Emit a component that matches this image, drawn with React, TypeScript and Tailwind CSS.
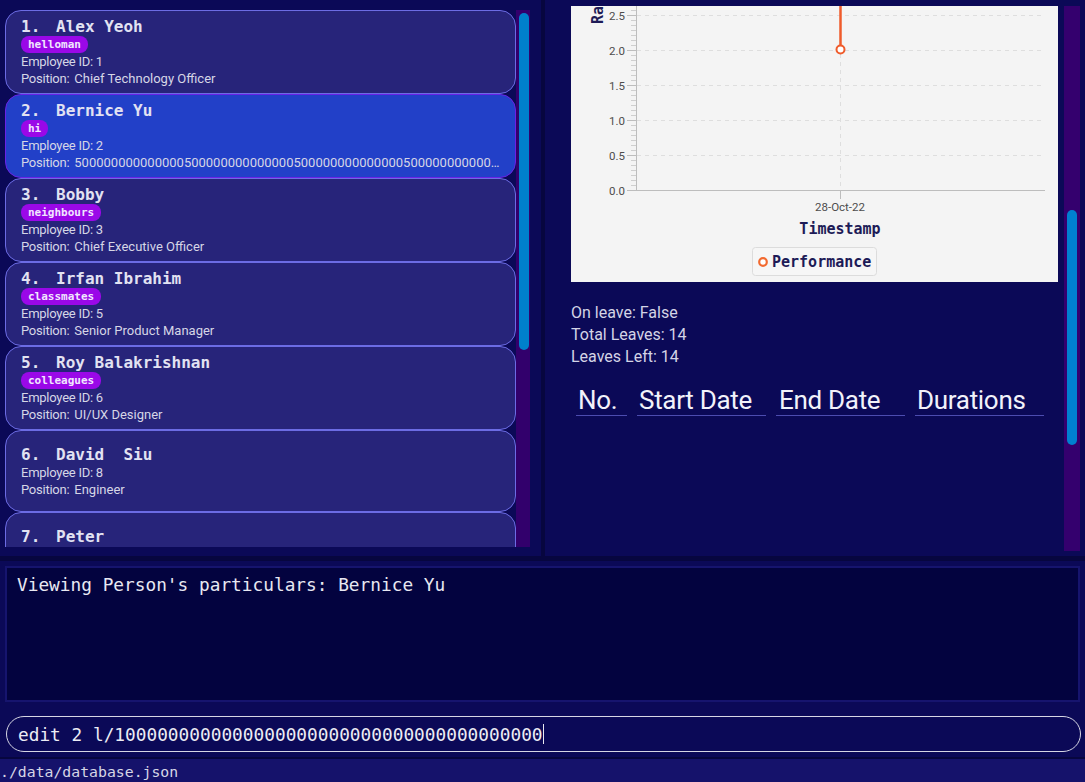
import React from "react";

type Person = {
  n: number;
  name: string;
  tag?: string;
  id: number;
  pos: string;
  selected?: boolean;
};

const people: Person[] = [
  { n: 1, name: "Alex Yeoh", tag: "helloman", id: 1, pos: "Chief Technology Officer" },
  {
    n: 2,
    name: "Bernice Yu",
    tag: "hi",
    id: 2,
    pos: ("5" + "0".repeat(14)).repeat(7),
    selected: true,
  },
  { n: 3, name: "Bobby", tag: "neighbours", id: 3, pos: "Chief Executive Officer" },
  { n: 4, name: "Irfan Ibrahim", tag: "classmates", id: 5, pos: "Senior Product Manager" },
  { n: 5, name: "Roy Balakrishnan", tag: "colleagues", id: 6, pos: "UI/UX Designer" },
  { n: 6, name: "David  Siu", id: 8, pos: "Engineer" },
  { n: 7, name: "Peter", id: 9, pos: "Intern" },
];

const mono = "font-['DejaVu_Sans_Mono',monospace]";
const sans = "font-['Roboto',sans-serif]";

function Card({ p }: { p: Person }) {
  return (
    <div
      className={
        "shrink-0 flex flex-col justify-center rounded-[16px] border pl-[15px] pr-[10px] " +
        (p.tag ? "h-[84px] " : "h-[82px] ") +
        (p.selected ? "bg-[#2240c8] border-[#6a22e6]" : "bg-[#27247a] border-[#6c6ce4]")
      }
    >
      <div className={`${mono} flex whitespace-pre text-[16px] leading-[19px] font-bold text-[#e2e2f2]`}>
        <span className="w-[35px] shrink-0">{`${p.n}.`}</span>
        <span>{p.name}</span>
      </div>
      {p.tag && (
        <div className="flex">
          <span
            className={`${mono} h-[17px] leading-[17px] rounded-[8px] bg-[#9a08e8] px-[7px] text-[11px] font-bold text-[#f1e6ff]`}
          >
            {p.tag}
          </span>
        </div>
      )}
      <div className={`${sans} text-[13px] leading-[17px] tracking-[-0.25px] text-[#d6d6e6]`}>
        Employee ID: {p.id}
      </div>
      <div className={`${sans} text-[13px] leading-[17px] tracking-[-0.25px] text-[#d6d6e6] truncate`}>
        Position: <span className="ml-[2px] tracking-normal">{p.pos}</span>
      </div>
    </div>
  );
}

function Chart() {
  const majors = [184, 149, 114, 79, 44, 9];
  const labels = ["0.0", "0.5", "1.0", "1.5", "2.0", "2.5"];
  const minors: number[] = [];
  for (let y = 184; y >= 0; y -= 5) {
    if (!majors.includes(y)) minors.push(y);
  }
  return (
    <svg width="487" height="276" className="block shrink-0" style={{ background: "#f4f4f4" }}>
      {majors.slice(1).map((y) => (
        <line key={y} x1={66} x2={471} y1={y + 0.5} y2={y + 0.5} stroke="#dedede" strokeDasharray="4 4" />
      ))}
      <line x1={269.5} x2={269.5} y1={0} y2={184} stroke="#dedede" strokeDasharray="4 4" />
      <line x1={65.5} x2={65.5} y1={0} y2={185} stroke="#bdbdbd" />
      <line x1={65} x2={474} y1={184.5} y2={184.5} stroke="#bdbdbd" />
      {majors.map((y) => (
        <line key={"M" + y} x1={56} x2={65} y1={y + 0.5} y2={y + 0.5} stroke="#bdbdbd" />
      ))}
      {minors.map((y) => (
        <line key={"m" + y} x1={60} x2={65} y1={y + 0.5} y2={y + 0.5} stroke="#cfcfcf" />
      ))}
      {majors.map((y, i) => (
        <text
          key={"t" + y}
          x={54}
          y={y + 4.5}
          textAnchor="end"
          fontSize="11.5"
          fill="#4d4d4d"
          fontFamily="Roboto, sans-serif"
        >
          {labels[i]}
        </text>
      ))}
      <line x1={269.5} x2={269.5} y1={184} y2={193} stroke="#bdbdbd" />
      <text x={269} y={205} textAnchor="middle" fontSize="11.5" fill="#4d4d4d" fontFamily="Roboto, sans-serif">
        28-Oct-22
      </text>
      <text
        x={269}
        y={228}
        textAnchor="middle"
        fontSize="15"
        fontWeight="bold"
        fill="#1d1b57"
        fontFamily="'DejaVu Sans Mono', monospace"
      >
        Timestamp
      </text>
      <text
        transform="translate(32,18) rotate(-90)"
        fontSize="15"
        fontWeight="bold"
        fill="#1d1b57"
        fontFamily="'DejaVu Sans Mono', monospace"
      >
        Rating
      </text>
      <line x1={269.5} x2={269.5} y1={0} y2={40} stroke="#ef5b2b" strokeWidth="2.5" />
      <circle cx={269.5} cy={43.5} r={4} fill="#ffffff" stroke="#ef5b2b" strokeWidth="2" />
      <rect x={181.5} y={241.5} width={124} height={28} rx={3} fill="#f6f6f6" stroke="#dcdcdc" />
      <circle cx={192} cy={256} r={3.8} fill="#ffffff" stroke="#f26a30" strokeWidth="2.2" />
      <text
        x={201}
        y={261}
        fontSize="15"
        fontWeight="bold"
        fill="#1d1b57"
        fontFamily="'DejaVu Sans Mono', monospace"
      >
        Performance
      </text>
    </svg>
  );
}

export default function App() {
  const cmd = "edit 2 l/1" + "0".repeat(39);
  return (
    <div className="w-[1085px] h-[782px] bg-[#0b0957] flex flex-col overflow-hidden">
      {/* top split */}
      <div className="h-[556px] flex shrink-0">
        {/* left list */}
        <div className="w-[541px] shrink-0 pt-[10px] pl-[5px] pr-[11px] pb-[9px] flex">
          <div className="w-[511px] h-[537px] overflow-hidden flex flex-col">
            {people.map((p) => (
              <Card key={p.n} p={p} />
            ))}
          </div>
          <div className="w-[14px] h-[537px] bg-[#32006c] pt-[3px] pl-[3px] pr-[1px]">
            <div className="h-[337px] rounded-full bg-[#0080cc]" />
          </div>
        </div>
        <div className="w-[4px] bg-[#07063f] shrink-0" />
        {/* right detail */}
        <div className="flex-1 pt-[6px] pb-[5px] pl-[26px] pr-[5px] flex gap-[6px]">
          <div className="w-[487px] h-[545px] overflow-hidden flex flex-col">
            <Chart />
            <div className={`${sans} mt-[20px] text-[16px] leading-[22px] text-[#d4d4e6]`}>
              <div>On leave: False</div>
              <div>Total Leaves: 14</div>
              <div>Leaves Left: 14</div>
            </div>
            <div
              className={`${sans} mt-[17px] ml-[5px] flex gap-[10px] text-[26px] leading-[30px] tracking-[-0.3px] text-[#f2f2fa]`}
            >
              <div className="w-[51px] pl-[2px] border-b border-[#4c4cb0]">No.</div>
              <div className="w-[129px] pl-[2px] border-b border-[#4c4cb0]">Start Date</div>
              <div className="w-[129px] pl-[3px] border-b border-[#4c4cb0]">End Date</div>
              <div className="w-[129px] pl-[2px] border-b border-[#4c4cb0]">Durations</div>
            </div>
          </div>
          <div className="w-[16px] h-[545px] bg-[#34006e] pt-[204px] px-[3px]">
            <div className="h-[235px] rounded-full bg-[#0080d0]" />
          </div>
        </div>
      </div>
      <div className="h-[5px] bg-[#07063f] shrink-0" />
      {/* result display */}
      <div className="h-[147px] shrink-0 pt-[5px] pb-[6px] px-[5px]">
        <div
          className={`${mono} h-[136px] border-2 border-[#16146e] bg-[#03033f] pl-[10px] pt-[6px] text-[17.8px] leading-[21px] text-[#e8e8f2] whitespace-pre`}
        >
          Viewing Person's particulars: Bernice Yu
        </div>
      </div>
      {/* command box */}
      <div className="h-[49px] shrink-0 pt-[8px] pb-[5px] pl-[6px] pr-[4px]">
        <div className="h-[36px] rounded-full border border-[#d6d6e4] flex items-center pl-[11px]">
          <span className={`${mono} text-[17.8px] leading-[21px] text-[#ececf4] whitespace-pre`}>{cmd}</span>
          <span className="w-[1px] h-[20px] bg-[#e8e8f0]" />
        </div>
      </div>
      <div className="h-[2px] bg-[#07063f] shrink-0" />
      <div className="flex-1 bg-[#15126b] flex items-center pt-[2px]">
        <span className={`${mono} text-[14.8px] text-[#d6d6e6] leading-[18px]`}>./data/database.json</span>
      </div>
    </div>
  );
}
